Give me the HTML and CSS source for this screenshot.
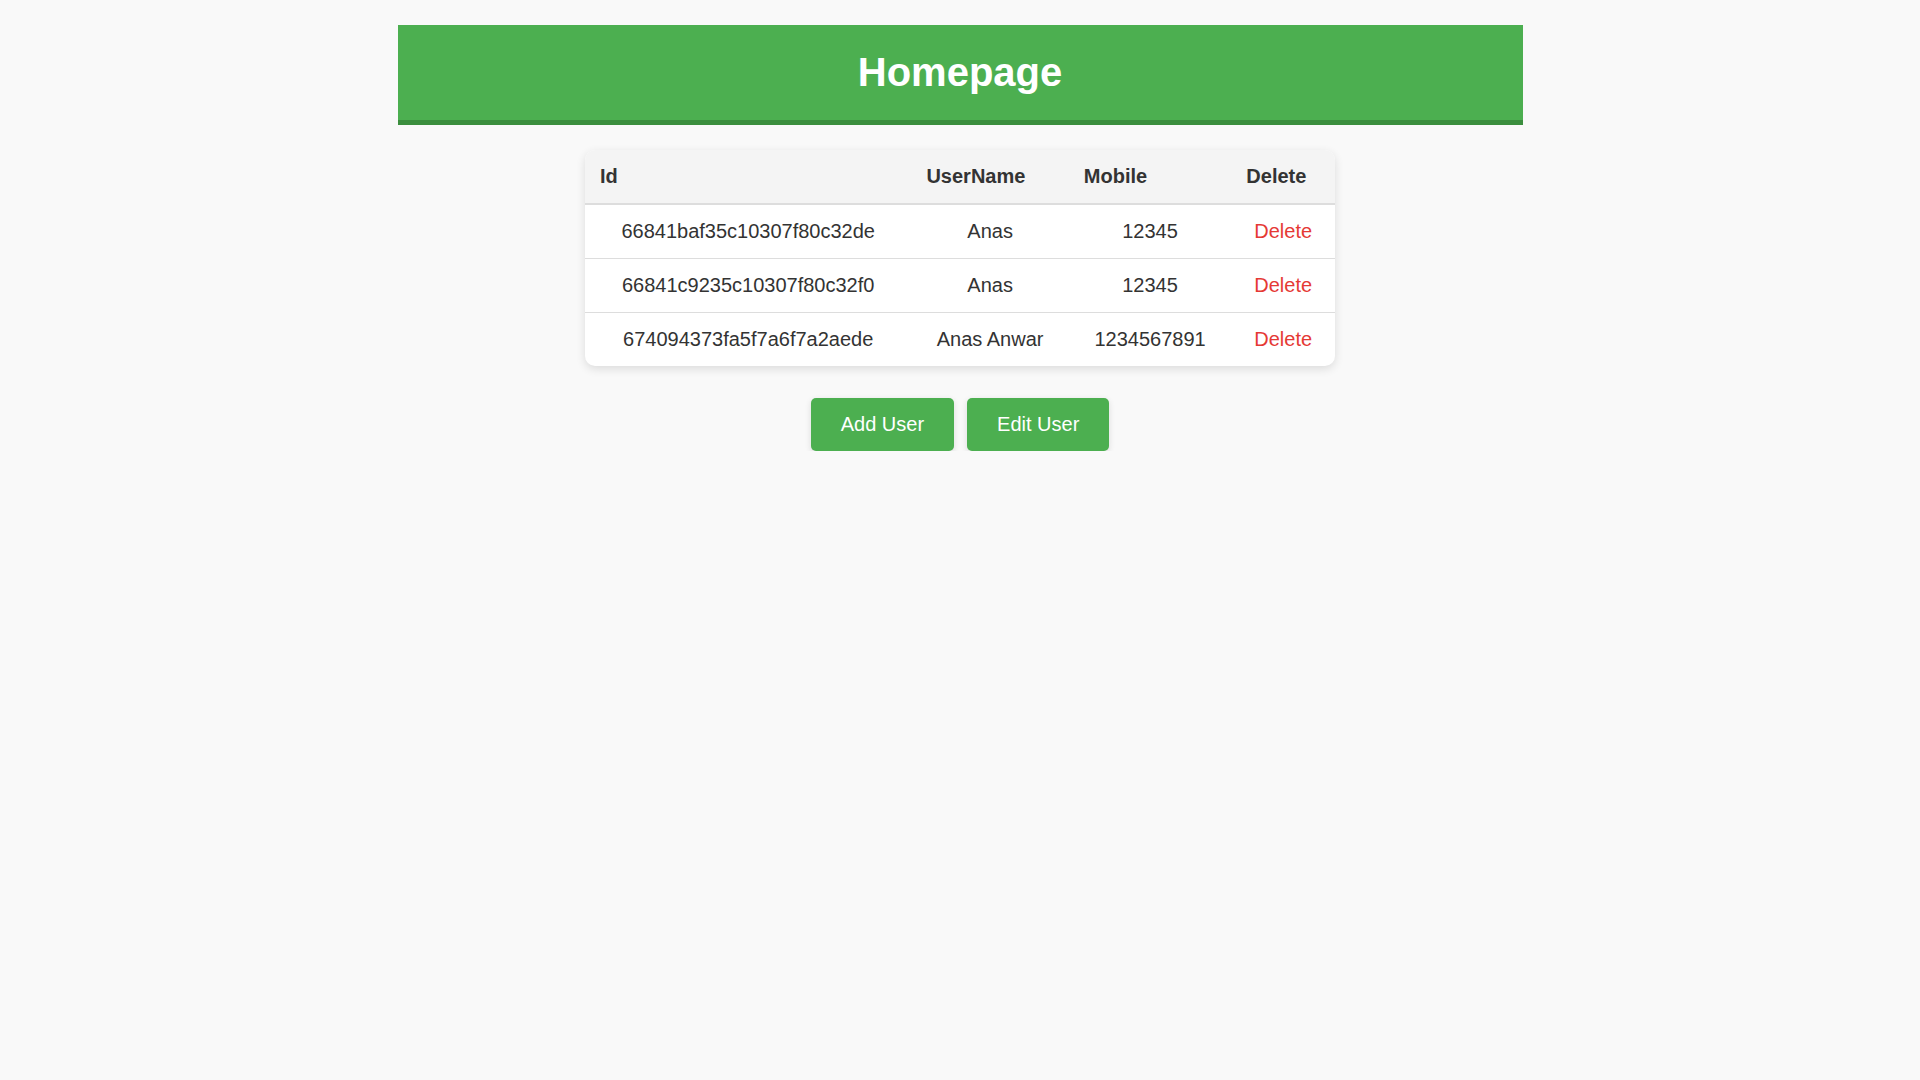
FILE: index.html
```html
<!DOCTYPE html>
<html lang="en">
<head>
<meta charset="utf-8">
<title>Homepage</title>
<link rel="stylesheet" href="styles.css">
</head>
<body>
<div class="page">
  <header class="topbar">
    <h1 class="title">Homepage</h1>
  </header>
  <table class="users">
    <thead>
      <tr><th>Id</th><th>UserName</th><th>Mobile</th><th>Delete</th></tr>
    </thead>
    <tbody>
      <tr><td>66841baf35c10307f80c32de</td><td>Anas</td><td>12345</td><td><span class="del">Delete</span></td></tr>
      <tr><td>66841c9235c10307f80c32f0</td><td>Anas</td><td>12345</td><td><span class="del">Delete</span></td></tr>
      <tr><td>674094373fa5f7a6f7a2aede</td><td>Anas Anwar</td><td>1234567891</td><td><span class="del">Delete</span></td></tr>
    </tbody>
  </table>
  <div class="actions">
    <button class="btn">Add User</button>
    <button class="btn">Edit User</button>
  </div>
</div>
</body>
</html>
```
FILE: styles.css
```css
html, body {
  margin: 0;
  padding: 0;
  background: #f9f9f9;
  font-family: "Liberation Sans", Arial, sans-serif;
  color: #333;
}
.page {
  width: 1125px;
  margin: 25px auto 0;
}
.topbar {
  background: #4caf50;
  border-bottom: 5px solid #3b8e3e;
  padding: 24px 0 25px;
  text-align: center;
}
.title {
  margin: 0;
  font-size: 40px;
  font-weight: bold;
  color: #fff;
  line-height: 46px;
}
.users {
  width: 750px;
  margin: 25px auto 0;
  border-collapse: collapse;
  background: #fff;
  border-radius: 10px;
  overflow: hidden;
  box-shadow: 0 3px 10px rgba(0, 0, 0, 0.12);
  font-size: 20px;
}
.users th {
  background: #f4f4f4;
  text-align: left;
  font-weight: bold;
  color: #333;
  padding: 15px;
  border-bottom: 2px solid #dddddd;
  line-height: 23px;
}
.users td {
  text-align: center;
  padding: 15px;
  line-height: 23px;
  border-bottom: 1px solid #dddddd;
  color: #333;
}
.users tbody tr:last-child td {
  border-bottom: none;
}
.del {
  color: #e53935;
  cursor: pointer;
}
.actions {
  display: flex;
  justify-content: center;
  gap: 13px;
  margin-top: 32px;
}
.btn {
  font-family: "Liberation Sans", Arial, sans-serif;
  font-size: 20px;
  line-height: 23px;
  padding: 15px 30px;
  background: #4caf50;
  color: #fff;
  border: none;
  border-radius: 5px;
  box-shadow: 0 2px 6px rgba(0, 0, 0, 0.12);
  cursor: pointer;
}
```
